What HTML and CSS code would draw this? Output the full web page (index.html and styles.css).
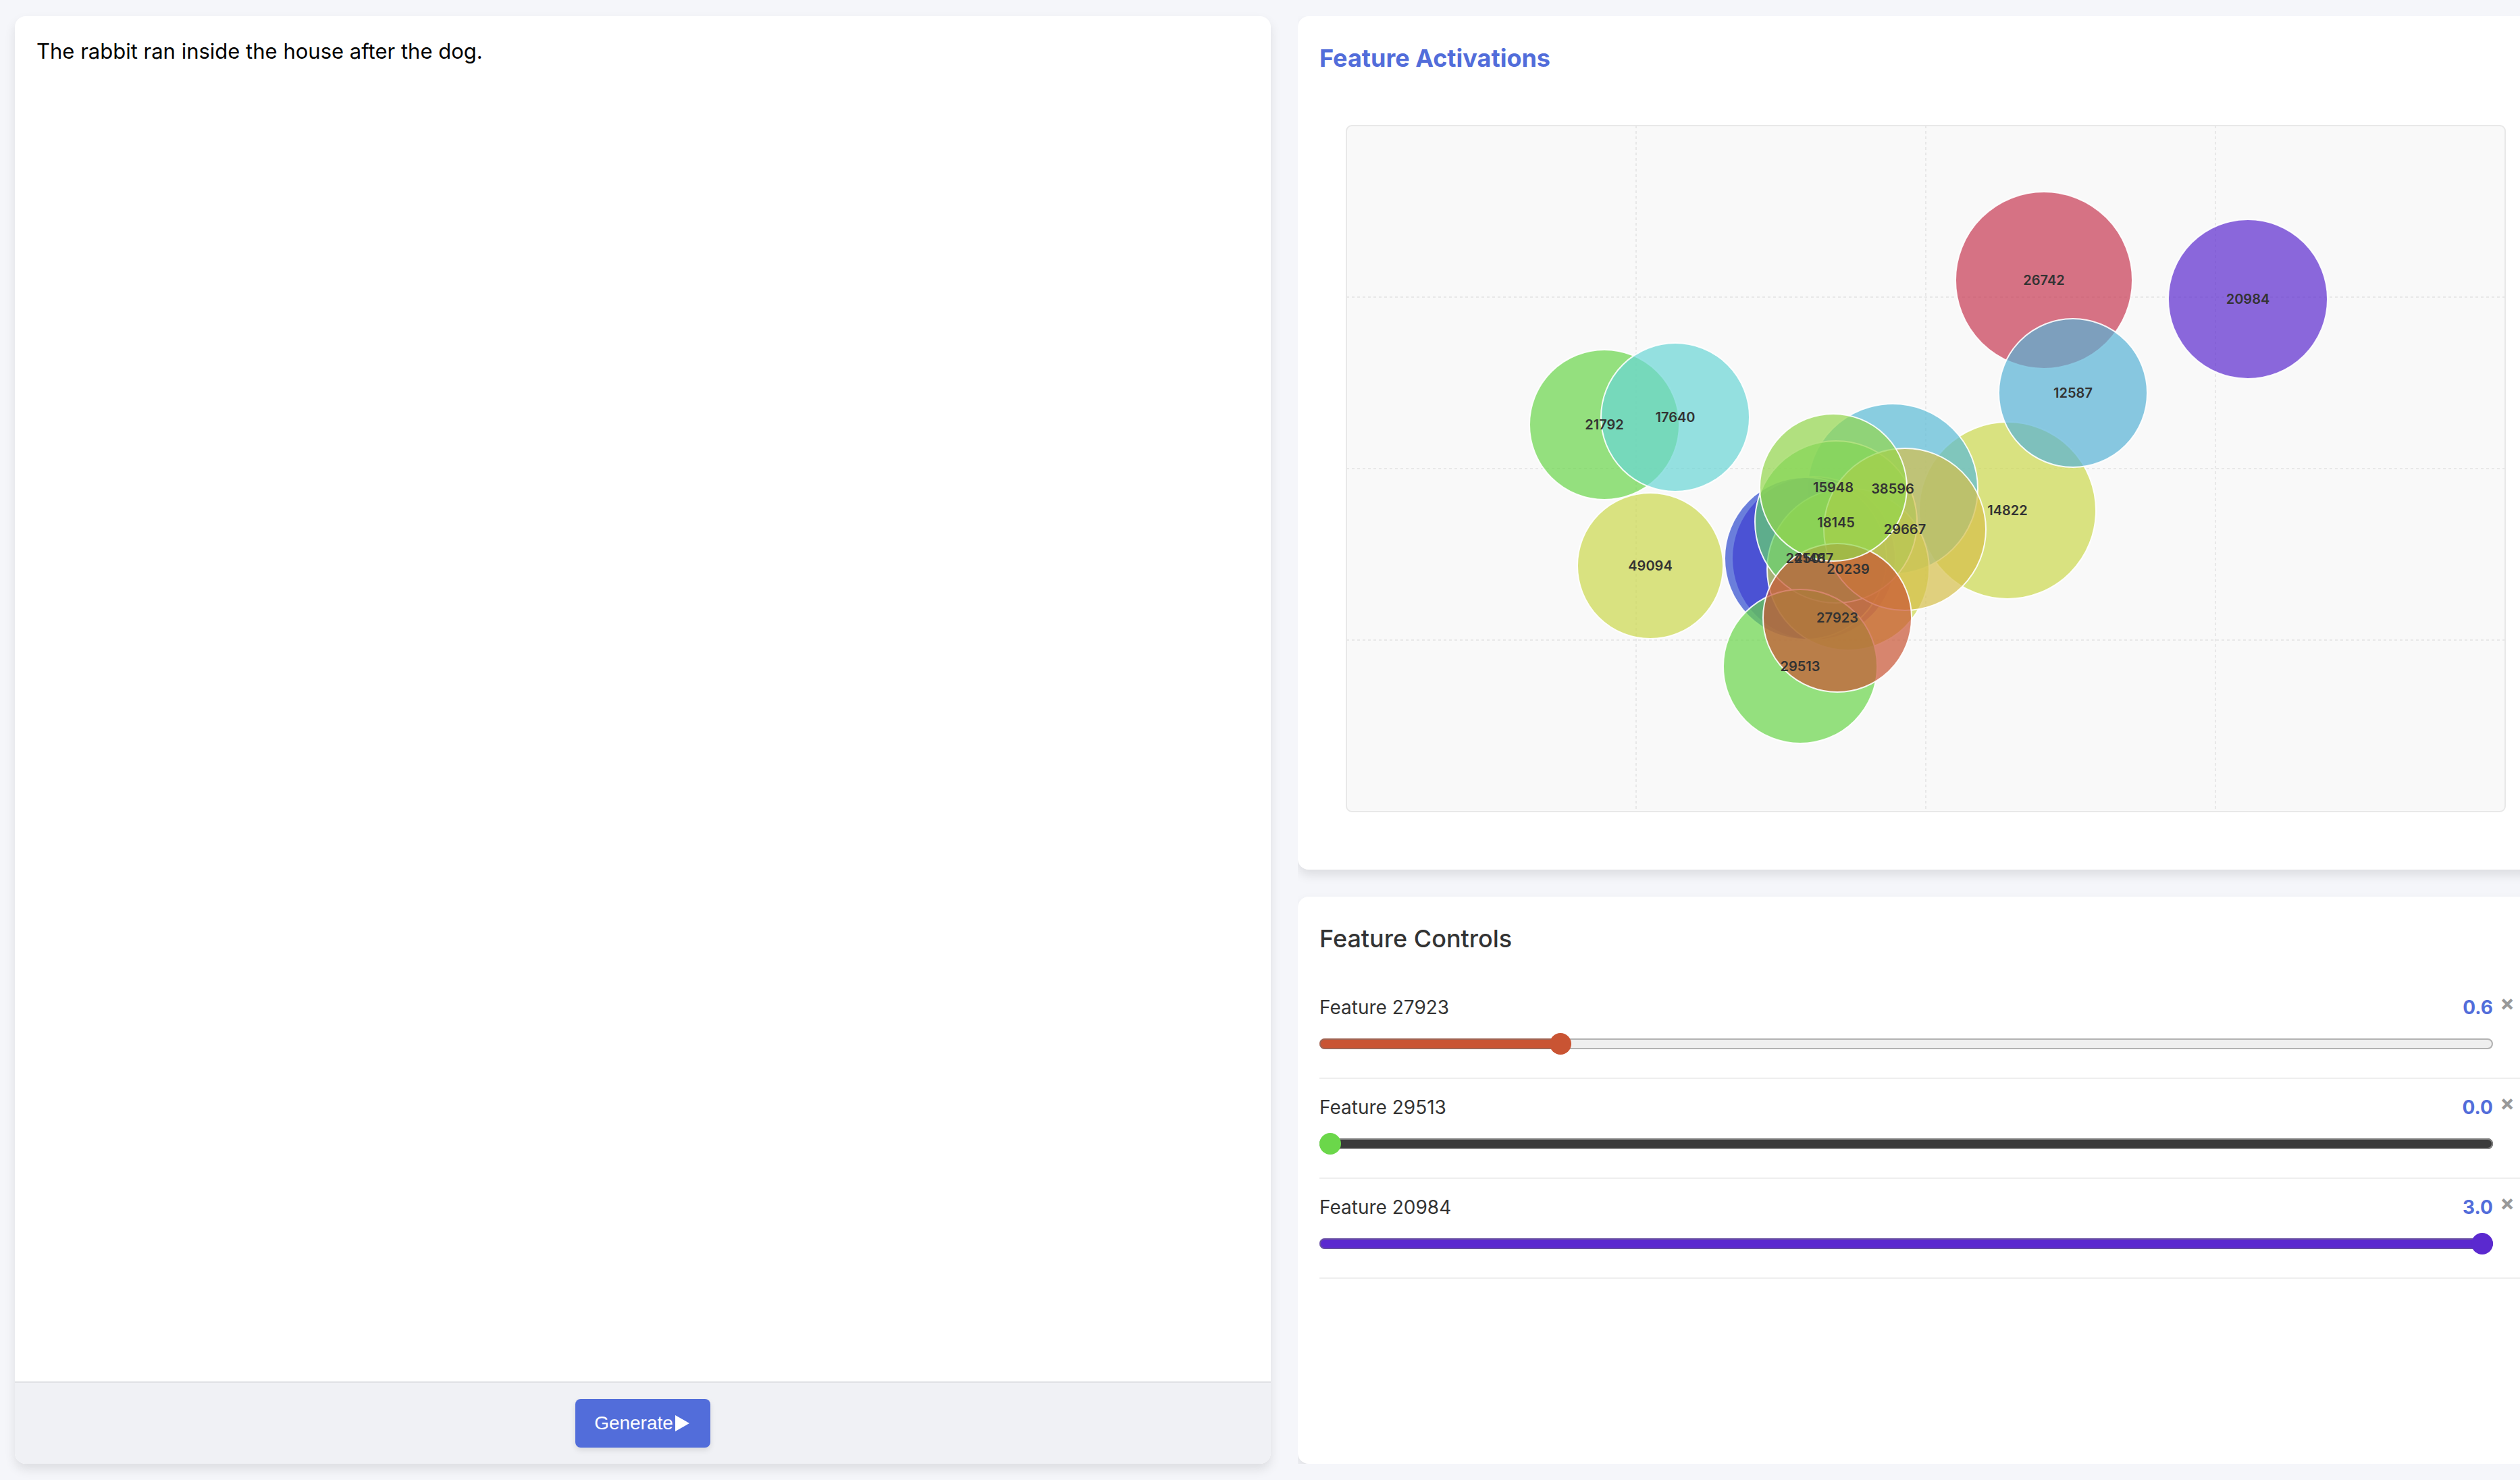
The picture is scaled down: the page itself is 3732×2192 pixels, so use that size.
FILE: index.html
```html
<!DOCTYPE html>
<html lang="en">
<head>
<meta charset="utf-8">
<title>Feature Activations</title>
<link rel="stylesheet" href="styles.css">
</head>
<body>
<main class="layout">
  <section class="card editor">
    <textarea class="editor-text" aria-label="Prompt" spellcheck="false">The rabbit ran inside the house after the dog.</textarea>
    <footer class="editor-bar">
      <button class="generate" type="button">Generate<svg class="play" viewBox="0 0 27 28" aria-hidden="true"><path d="M3 2L24 14L3 26Z"/></svg></button>
    </footer>
  </section>

  <div class="side">
    <section class="card activations">
      <h2 class="heading accent">Feature Activations</h2>
      <svg class="chart" viewBox="0 0 1796 1096" role="img" aria-label="Feature activation bubbles">
        <g transform="translate(40 40)">
          <rect class="plot" width="1716" height="1016" rx="8"/>
          <g class="grid">
            <path d="M429 0V1016M858 0V1016M1287 0V1016M0 254H1716M0 508H1716M0 762H1716"/>
          </g>
          <g class="bubbles">
            <circle cx="979" cy="570" r="131" fill="#ccd84d"/>
            <circle cx="1033" cy="229" r="131" fill="#c83953"/>
            <circle cx="809" cy="538" r="126" fill="#5abad6"/>
            <circle cx="692" cy="641" r="121" fill="#6525d5"/>
            <circle cx="680" cy="641" r="120" fill="#2e4acf"/>
            <circle cx="743" cy="657" r="120" fill="#ccd84d"/>
            <circle cx="725" cy="587" r="120" fill="#67d46e"/>
            <circle cx="827" cy="598" r="120" fill="#d6bf4a"/>
            <circle cx="1335" cy="257" r="118" fill="#5b29cf"/>
            <circle cx="672" cy="801" r="114" fill="#69d64a"/>
            <circle cx="382" cy="443" r="111" fill="#69d64a"/>
            <circle cx="727" cy="729" r="110" fill="#c95433"/>
            <circle cx="721" cy="536" r="109" fill="#93d64c"/>
            <circle cx="1076" cy="396" r="110" fill="#57b2d6"/>
            <circle cx="487" cy="432" r="110" fill="#6ad6d5"/>
            <circle cx="450" cy="652" r="108" fill="#ccd84d"/>
          </g>
          <g class="labels">
            <text x="979" y="570">14822</text>
            <text x="1033" y="229">26742</text>
            <text x="809" y="538">38596</text>
            <text x="692" y="641">41487</text>
            <text x="680" y="641">22501</text>
            <text x="743" y="657">20239</text>
            <text x="725" y="588">18145</text>
            <text x="827" y="598">29667</text>
            <text x="1335" y="257">20984</text>
            <text x="672" y="801">29513</text>
            <text x="382" y="443">21792</text>
            <text x="727" y="729">27923</text>
            <text x="721" y="536">15948</text>
            <text x="1076" y="396">12587</text>
            <text x="487" y="432">17640</text>
            <text x="450" y="652">49094</text>
          </g>
        </g>
      </svg>
    </section>

    <section class="card controls">
      <h2 class="heading">Feature Controls</h2>
      <div class="control orange">
        <label class="name" for="f27923">Feature 27923</label>
        <output class="value" for="f27923">0.6</output>
        <button class="remove" type="button" aria-label="Remove feature 27923">×</button>
        <input class="slider" id="f27923" type="range" min="0" max="3" step="0.1" value="0.6">
      </div>
      <div class="control green">
        <label class="name" for="f29513">Feature 29513</label>
        <output class="value" for="f29513">0.0</output>
        <button class="remove" type="button" aria-label="Remove feature 29513">×</button>
        <input class="slider" id="f29513" type="range" min="0" max="3" step="0.1" value="0">
      </div>
      <div class="control purple">
        <label class="name" for="f20984">Feature 20984</label>
        <output class="value" for="f20984">3.0</output>
        <button class="remove" type="button" aria-label="Remove feature 20984">×</button>
        <input class="slider" id="f20984" type="range" min="0" max="3" step="0.1" value="3">
      </div>
    </section>
  </div>
</main>
</body>
</html>
```
FILE: styles.css
```css
* { box-sizing: border-box; }

body {
  margin: 0;
  overflow: hidden;
  background: #f5f6fa;
  color: #333;
  font-family: Inter, "Noto Sans", sans-serif;
}

.layout {
  display: grid;
  grid-template-columns: minmax(0, 1fr) minmax(0, 1fr);
  gap: 40px;
  height: 100vh;
  margin: 0 -50px 0 22px;
  padding: 24px 0;
}

.card {
  border-radius: 16px;
  background: #fff;
  box-shadow: 0 8px 16px rgba(0, 0, 0, 0.1);
}

.editor {
  display: flex;
  flex-direction: column;
}

.editor-text {
  flex: 1;
  padding: 32px;
  border: 0;
  border-radius: 16px 16px 0 0;
  outline: 0;
  resize: none;
  background: transparent;
  color: #000;
  font: 400 31px/40px Inter, "Noto Sans", sans-serif;
}

.editor-bar {
  display: flex;
  justify-content: center;
  padding: 24px;
  border-top: 2px solid #e0e1e5;
  border-radius: 0 0 16px 16px;
  background: #f0f1f5;
}

.generate {
  display: flex;
  align-items: center;
  height: 72px;
  padding: 0 28px;
  border: 0;
  border-radius: 8px;
  background: #526dda;
  box-shadow: 0 4px 8px rgba(0, 0, 0, 0.1);
  color: #fff;
  font: 400 28px/36px "Liberation Sans", Arial, sans-serif;
}

.play {
  width: 27px;
  height: 28px;
  fill: #fff;
}

.side {
  display: flex;
  flex-direction: column;
  gap: 40px;
  overflow: hidden;
}

.activations { padding: 32px 32px 46px; }

.controls {
  flex: 1;
  padding: 32px;
}

.heading {
  margin: 0 0 30px;
  font-size: 36px;
  font-weight: 500;
  line-height: 60px;
}

.accent {
  color: #526dda;
  font-weight: 700;
}

.chart {
  display: block;
  width: 100%;
}

.plot {
  fill: #f9f9f9;
  stroke: #e8e8e8;
  stroke-width: 2;
}

.grid {
  fill: none;
  stroke: #e8e8e8;
  stroke-width: 2;
  stroke-dasharray: 4;
}

.bubbles {
  fill-opacity: 0.7;
  stroke: #fff;
  stroke-opacity: 0.9;
  stroke-width: 2;
}

.labels {
  fill: #333;
  font-size: 20px;
  font-weight: 600;
  text-anchor: middle;
  dominant-baseline: central;
}

.control {
  display: grid;
  grid-template-columns: 1fr auto 42px;
  row-gap: 20px;
  padding: 24px 16px 34px 0;
  border-bottom: 2px solid #eee;
  font-size: 28px;
  line-height: 36px;
}

.value {
  color: #526dda;
  font-weight: 700;
}

.remove {
  height: 24px;
  padding: 0;
  border: 0;
  background: none;
  color: #999;
  font: 700 32px/24px Inter, sans-serif;
}

.slider {
  grid-column: 1 / 3;
  width: 100%;
  height: 32px;
  margin: 0;
  appearance: none;
  background: none;
}

.slider::-webkit-slider-runnable-track {
  height: 16px;
  border-radius: 8px;
  background: var(--track);
  box-shadow: inset 0 0 0 2px var(--edge);
}

.slider::-webkit-slider-thumb {
  width: 32px;
  height: 32px;
  margin-top: -8px;
  appearance: none;
  border-radius: 50%;
  background: var(--tone);
}

.orange {
  --tone: #c95433;
  --edge: rgba(118, 118, 118, 0.5);
  --track: linear-gradient(90deg, #c95433 20%, #efefef 20%);
}

.green {
  --tone: #6bd74a;
  --edge: #828282;
  --track: #3b3b3b;
}

.purple {
  --tone: #5b29cf;
  --edge: rgba(118, 118, 118, 0.5);
  --track: #5b29cf;
}
```
